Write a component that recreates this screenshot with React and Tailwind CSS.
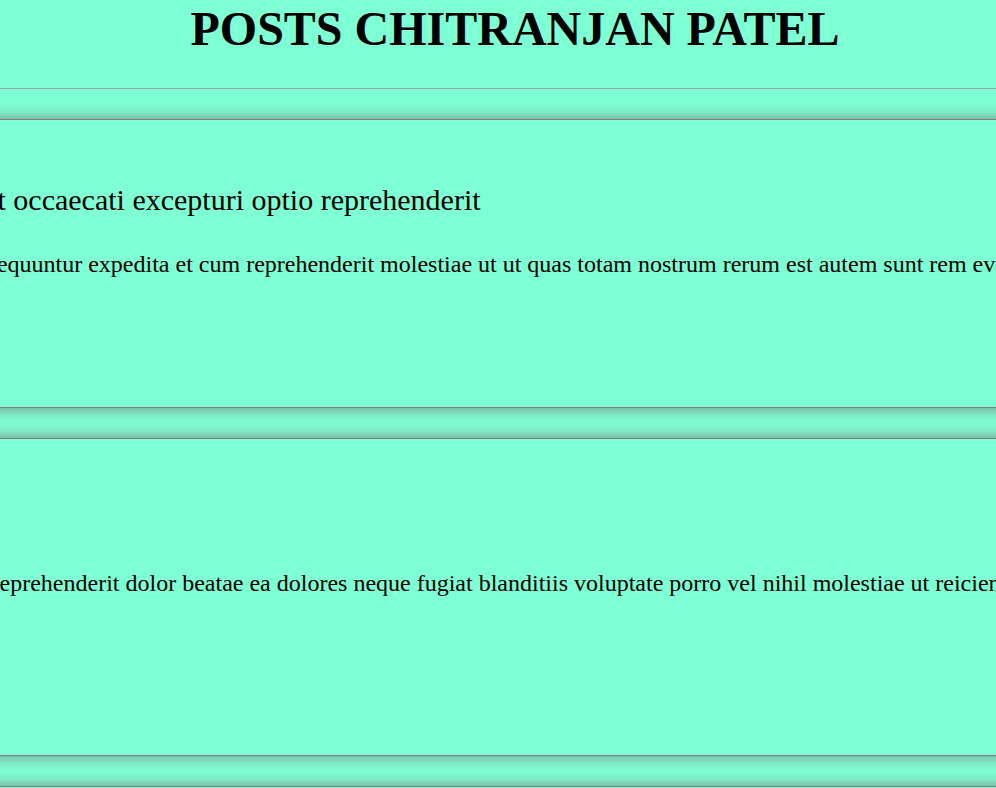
import React from "react";

const posts = [
  {
    title: "sunt aut facere repellat provident occaecati excepturi optio reprehenderit",
    body: ["quia et suscipit suscipit recusandae consequuntur expedita et cum reprehenderit molestiae ut ut quas totam nostrum rerum est autem sunt rem eveniet architecto"],
    pb: "pb-[129px]",
  },
  {
    title: "qui est esse",
    body: [
      "est rerum tempore vitae sequi sint nihil reprehenderit dolor beatae ea dolores neque fugiat blanditiis voluptate porro vel nihil molestiae ut reiciendis qui aperiam non debitis possimus",
      "qui neque nisi nulla",
    ],
    pb: "pb-[130px]",
  },
  {
    title: "ea molestias quasi exercitationem repellat qui ipsa sit aut",
    body: ["et iusto sed quo iure voluptatem occaecati omnis eligendi aut ad voluptatem doloribus vel accusantium quis pariatur molestiae porro eius odio et labore et velit aut"],
    pb: "pb-[129px]",
  },
];

export default function App() {
  return (
    <div className="w-full h-[788px] overflow-hidden bg-[#7fffd4] text-black font-['Liberation_Serif','Times_New_Roman',serif]">
      <div className="ml-[-403px] w-[1836px]">
        <header className="h-[89px] border-b border-[#a0a0a0] pt-[1px]">
          <h1 className="text-[48px] leading-[55px] font-bold text-center">POSTS CHITRANJAN PATEL</h1>
        </header>
        <div className="mt-[30px] flex flex-col gap-[30px]">
          {posts.map((p, i) => (
            <article
              key={i}
              className={`border border-[#808080] shadow-[0_0_15px_#808080] pt-[63px] px-[13px] ${p.pb}`}
            >
              <h2 className="text-[30px] leading-[34px] font-normal whitespace-nowrap">{p.title}</h2>
              <p className="mt-[33px] text-[24px] leading-[28px] whitespace-nowrap">
                {p.body.map((line, j) => (
                  <React.Fragment key={j}>
                    {j > 0 && <br />}
                    {line}
                  </React.Fragment>
                ))}
              </p>
            </article>
          ))}
        </div>
      </div>
    </div>
  );
}
